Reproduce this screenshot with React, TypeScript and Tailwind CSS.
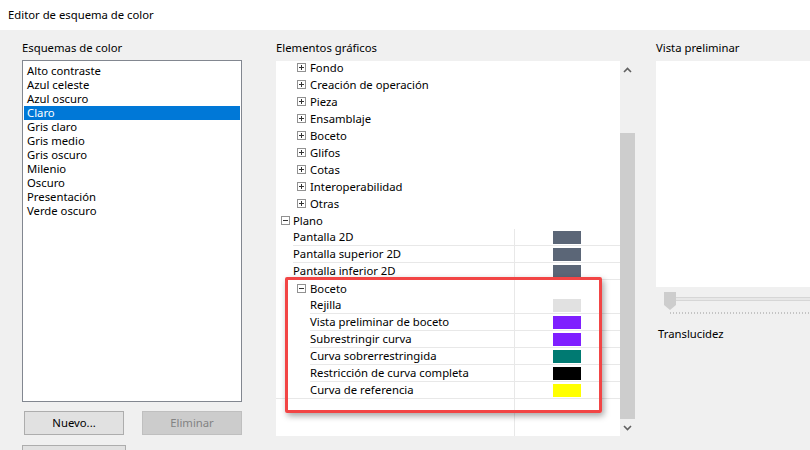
const schemes = [
  'Alto contraste',
  'Azul celeste',
  'Azul oscuro',
  'Claro',
  'Gris claro',
  'Gris medio',
  'Gris oscuro',
  'Milenio',
  'Oscuro',
  'Presentación',
  'Verde oscuro',
]

const groups = [
  'Fondo',
  'Creación de operación',
  'Pieza',
  'Ensamblaje',
  'Boceto',
  'Glifos',
  'Cotas',
  'Interoperabilidad',
  'Otras',
]

const planoItems = [
  { label: 'Pantalla 2D', color: '#5b6677' },
  { label: 'Pantalla superior 2D', color: '#5b6677' },
  { label: 'Pantalla inferior 2D', color: '#5b6677' },
]

const bocetoItems = [
  { label: 'Rejilla', color: '#e1e1e1' },
  { label: 'Vista preliminar de boceto', color: '#7f1fff' },
  { label: 'Subrestringir curva', color: '#7f1fff' },
  { label: 'Curva sobrerrestringida', color: '#007a72' },
  { label: 'Restricción de curva completa', color: '#000000' },
  { label: 'Curva de referencia', color: '#ffff00' },
]

function Expander({ open }: { open?: boolean }) {
  return (
    <svg width="9" height="9" viewBox="0 0 9 9" className="shrink-0">
      <rect x="0.5" y="0.5" width="8" height="8" fill="#fff" stroke="#919191" />
      <path d="M2 4.5h5" stroke="#333" />
      {!open && <path d="M4.5 2v5" stroke="#333" />}
    </svg>
  )
}

function PropRow({ label, color, indent, last }: { label: string; color: string; indent: number; last?: boolean }) {
  return (
    <div className="flex h-[17px]">
      <div
        className={`flex flex-1 items-center ${last ? 'border-b border-[#e8e8e8]' : ''}`}
        style={{ paddingLeft: last ? indent : 0 }}
      >
        {!last && <div style={{ width: indent }} className="h-full shrink-0" />}
        <div className={`flex h-full flex-1 items-center pb-[1px] ${last ? '' : 'border-b border-[#e8e8e8]'}`}>
          {label}
        </div>
      </div>
      <div className="flex h-full w-[106px] shrink-0 items-start border-b border-l border-[#e8e8e8] pl-[38px] pt-[2px]">
        <div className="h-[13px] w-[28px]" style={{ backgroundColor: color }} />
      </div>
    </div>
  )
}

export default function App() {
  return (
    <div
      className="flex h-[450px] w-[810px] flex-col overflow-hidden bg-[#f0f0f0] text-[11.3px] text-black"
      style={{ fontFamily: '"Noto Sans", "Liberation Sans", sans-serif' }}
    >
      <div className="flex h-[30px] shrink-0 items-center bg-white pl-[8px]">Editor de esquema de color</div>

      <div className="flex flex-1">
        {/* esquemas */}
        <div className="flex w-[276px] shrink-0 flex-col pl-[22px] pt-[10px]">
          <div className="h-[20px] leading-[16px]">Esquemas de color</div>
          <div className="h-[342px] w-[220px] border border-[#828790] bg-white px-[1px] pt-[3px] leading-[14px]">
            {schemes.map((s) => (
              <div
                key={s}
                className={`h-[14px] pl-[3px] ${s === 'Claro' ? 'bg-[#0078d7] text-white' : ''}`}
              >
                {s}
              </div>
            ))}
          </div>
          <div className="mt-[9px] flex gap-[18px] pl-[2px]">
            <div className="flex h-[24px] w-[100px] items-center justify-center border border-[#adadad] bg-[#e1e1e1]">
              Nuevo...
            </div>
            <div className="flex h-[24px] w-[100px] items-center justify-center border border-[#bfbfbf] bg-[#cccccc] text-[#838383]">
              Eliminar
            </div>
          </div>
          <div className="mt-[10px] h-[10px] w-[104px] border border-[#adadad] bg-[#e1e1e1]" />
        </div>

        {/* elementos graficos */}
        <div className="flex w-[380px] shrink-0 flex-col pt-[10px]">
          <div className="h-[21px] leading-[16px]">Elementos gráficos</div>
          <div className="flex h-[375px] w-[361px]">
            <div className="relative flex-1 overflow-hidden bg-white">
              <div className="leading-[17px]">
                {groups.map((g, i) => (
                  <div
                    key={g}
                    className={`flex items-center gap-[4px] pl-[21px] ${i === 0 ? 'h-[15px] pb-[3px]' : 'h-[17px] pb-[1px]'}`}
                  >
                    <Expander />
                    <span>{g}</span>
                  </div>
                ))}
                <div className="flex h-[17px] items-center gap-[3px] pb-[1px] pl-[5px]">
                  <Expander open />
                  <span>Plano</span>
                </div>
                <div className="pl-[14px]">
                  {planoItems.map((p) => (
                    <PropRow key={p.label} label={p.label} color={p.color} indent={3} />
                  ))}
                  <div className="flex h-[17px]">
                    <div className="flex flex-1 items-center gap-[4px] pb-[1px] pl-[7px]">
                      <Expander open />
                      <span>Boceto</span>
                    </div>
                    <div className="w-[106px] shrink-0 border-l border-[#e8e8e8]" />
                  </div>
                  {bocetoItems.map((p, i) => (
                    <div key={p.label} className={i === bocetoItems.length - 1 ? '-ml-[14px]' : ''}>
                      <PropRow
                        label={p.label}
                        color={p.color}
                        indent={i === bocetoItems.length - 1 ? 34 : 20}
                        last={i === bocetoItems.length - 1}
                      />
                    </div>
                  ))}
                  <div className="flex h-[40px]">
                    <div className="flex-1" />
                    <div className="w-[106px] shrink-0 border-l border-[#e8e8e8]" />
                  </div>
                </div>
              </div>

              <div className="pointer-events-none absolute left-[9px] top-[216px] h-[136px] w-[317px] rounded-[2px] border-[3px] border-[#f24545] shadow-[2px_3px_6px_rgba(0,0,0,0.35)]" />
            </div>

            {/* scrollbar */}
            <div className="flex w-[17px] shrink-0 flex-col bg-[#f0f0f0]">
              <div className="flex h-[17px] items-center justify-center pr-[2px]">
                <svg width="9" height="6" viewBox="0 0 9 6">
                  <path d="M1 5l3.5-3.5L8 5" fill="none" stroke="#606060" strokeWidth="1.6" />
                </svg>
              </div>
              <div className="h-[55px]" />
              <div className="h-[286px] w-[15px] bg-[#cdcdcd]" />
              <div className="flex h-[17px] items-center justify-center pr-[2px]">
                <svg width="9" height="6" viewBox="0 0 9 6">
                  <path d="M1 1l3.5 3.5L8 1" fill="none" stroke="#606060" strokeWidth="1.6" />
                </svg>
              </div>
            </div>
          </div>
        </div>

        {/* vista preliminar */}
        <div className="flex flex-1 flex-col pt-[10px]">
          <div className="h-[21px] leading-[16px]">Vista preliminar</div>
          <div className="h-[226px] bg-white" />
          <div className="relative mt-[5px] h-[22px]">
            <div className="absolute left-[14px] right-0 top-[5px] h-[4px] border-y border-[#d6d6d6] bg-[#e7e7e7]" />
            <svg width="12" height="18" viewBox="0 0 12 18" className="absolute left-[8px] top-0">
              <path d="M0 0h12v13l-6 5-6-5z" fill="#cdcdcd" />
            </svg>
            <div className="absolute left-[14px] right-0 top-[20px] h-[2px] bg-[repeating-linear-gradient(90deg,#c4c4c4_0_1px,transparent_1px_3px)]" />
          </div>
          <div className="mt-[12px] pl-[2px]">Translucidez</div>
        </div>
      </div>
    </div>
  )
}
